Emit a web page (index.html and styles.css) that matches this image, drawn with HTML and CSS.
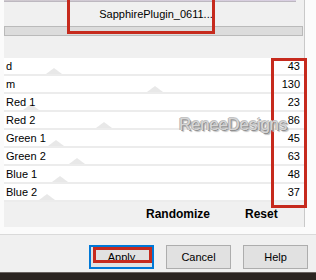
FILE: index.html
```html
<!DOCTYPE html>
<html lang="en">
<head>
  <meta charset="UTF-8">
  <meta name="viewport" content="width=device-width, initial-scale=1.0">
  <title>Sapphire Plugin Settings</title>
  <link rel="stylesheet" href="styles.css">
</head>
<body>

  <!-- Dialog -->
  <div class="dialog">
    <div class="frame">
      <div class="panel">
        <!-- Bottom edge of the preview -->
        <div class="preview-edge"></div>

        <!-- Preset name -->
        <div class="preset">SapphirePlugin_0611...</div>
        <div class="progress"></div>

        <!-- Parameter sliders -->
        <div class="params">
          <div class="row"><span class="thumb" style="left: 42px"></span><span class="label">d</span><span class="value">43</span></div>
          <div class="row"><span class="thumb" style="left: 143px"></span><span class="label">m</span><span class="value">130</span></div>
          <div class="row"><span class="thumb" style="left: 19px"></span><span class="label">Red 1</span><span class="value">23</span></div>
          <div class="row"><span class="thumb" style="left: 92px"></span><span class="label">Red 2</span><span class="value">86</span></div>
          <div class="row"><span class="thumb" style="left: 44px"></span><span class="label">Green 1</span><span class="value">45</span></div>
          <div class="row"><span class="thumb" style="left: 65px"></span><span class="label">Green 2</span><span class="value">63</span></div>
          <div class="row"><span class="thumb" style="left: 48px"></span><span class="label">Blue 1</span><span class="value">48</span></div>
          <div class="row"><span class="thumb" style="left: 35px"></span><span class="label">Blue 2</span><span class="value">37</span></div>
        </div>

        <!-- Randomize / Reset -->
        <div class="actions">
          <span>Randomize</span>
          <span>Reset</span>
        </div>
      </div>
    </div>

    <!-- Dialog buttons -->
    <div class="footer">
      <button class="btn btn-focus">Apply<span class="mark mark-apply"></span></button>
      <button class="btn">Cancel</button>
      <button class="btn">Help</button>
    </div>
    <div class="backdrop"></div>

    <!-- Tutorial annotations -->
    <span class="mark mark-preset"></span>
    <span class="mark mark-values"></span>
    <span class="watermark">ReneeDesigns</span>
  </div>

</body>
</html>
```

FILE: styles.css
```css
/*--------------------------------------------------------------
# Global Styles
--------------------------------------------------------------*/
* {
  margin: 0;
  padding: 0;
  box-sizing: border-box;
}

body {
  font-family: "Liberation Sans", Arial, sans-serif;
  font-size: 11px;
  color: #000;
  width: 316px;
  height: 280px;
  overflow: hidden;
  background: #f0f0f0;
}

/*--------------------------------------------------------------
# Dialog Frame
--------------------------------------------------------------*/
.dialog {
  position: relative;
  height: 280px;
}

.frame {
  background: #fbfbfb;
  padding: 0 11px 7px 4px;
}

.panel {
  background: #f0f0f0;
  border-right: 1px solid #c9c9c9;
}

.preview-edge {
  height: 2px;
  margin: 0 8px 0 0;
  background: linear-gradient(to right, #cfc9cf, #d9cfe2);
  border-bottom: 1px solid #bdb8c0;
}

/*--------------------------------------------------------------
# Preset
--------------------------------------------------------------*/
.preset {
  height: 24px;
  line-height: 24px;
  text-align: center;
  padding-left: 4px;
}

.progress {
  height: 10px;
  margin-right: 1px;
  background: #dcdcdc;
  border: 1px solid #bababa;
  margin-bottom: 22px;
}

/*--------------------------------------------------------------
# Parameter Rows
--------------------------------------------------------------*/
.row {
  position: relative;
  display: flex;
  justify-content: space-between;
  height: 18px;
  line-height: 16px;
  padding: 0 4px 0 2px;
  background: #fff;
  border-bottom: 2px solid #ececec;
}

.label,
.value {
  position: relative;
  z-index: 1;
}

/* Slider thumb */
.thumb {
  position: absolute;
  bottom: 0;
  width: 0;
  height: 0;
  border-left: 8px solid transparent;
  border-right: 8px solid transparent;
  border-bottom: 6px solid #e8e8e8;
}

/*--------------------------------------------------------------
# Randomize / Reset
--------------------------------------------------------------*/
.actions {
  display: flex;
  gap: 35px;
  height: 25px;
  line-height: 25px;
  padding-left: 142px;
  font-size: 12px;
  font-weight: bold;
}

/*--------------------------------------------------------------
# Footer Buttons
--------------------------------------------------------------*/
.footer {
  display: flex;
  justify-content: flex-end;
  gap: 12px;
  height: 38px;
  padding: 10px 8px 0 0;
  border-top: 1px solid #dadada;
  background: #f0f0f0;
}

.btn {
  position: relative;
  width: 65px;
  height: 24px;
  font-family: inherit;
  font-size: 11px;
  background: #e1e1e1;
  border: 1px solid #adadad;
}

.btn-focus {
  border-color: #0078d7;
  box-shadow: inset 0 0 0 1px #0078d7;
}

.backdrop {
  height: 8px;
  background: #2b2521;
  border-top: 1px solid #6a6461;
}

/*--------------------------------------------------------------
# Annotations
--------------------------------------------------------------*/
.mark {
  position: absolute;
  border: 3px solid #c62a1d;
}

.mark-preset {
  left: 67px;
  top: -3px;
  width: 148px;
  height: 37px;
}

.mark-values {
  left: 271px;
  top: 58px;
  width: 36px;
  height: 150px;
}

.mark-apply {
  top: 1px;
  left: 3px;
  right: 1px;
  bottom: 5px;
}

.watermark {
  position: absolute;
  left: 179px;
  top: 115px;
  font-size: 17px;
  letter-spacing: -0.3px;
  color: #d6d6d6;
  text-shadow: 1px 1px 0 #8f8f8f, -1px 0 0 #b4b4b4, 0 -1px 0 #c4c4c4, 2px 2px 1px #bdbdbd;
}
```
